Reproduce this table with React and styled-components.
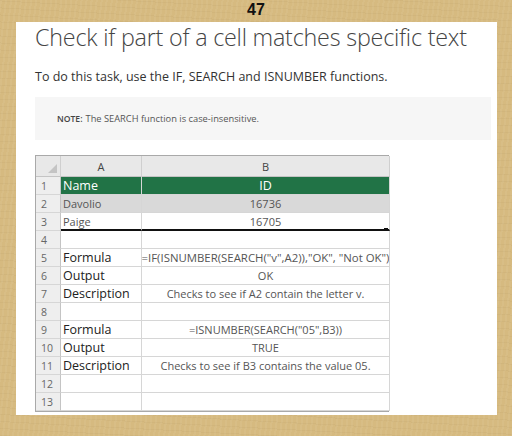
import React from "react";
import styled, { createGlobalStyle } from "styled-components";

const Global = createGlobalStyle`
  html, body { margin: 0; padding: 0; }
  body {
    width: 512px; height: 436px; overflow: hidden;
    background: #d5b97f;
    font-family: "Open Sans", "Noto Sans", sans-serif;
  }
`;

const Frame = styled.div`
  width: 512px;
  height: 436px;
  box-sizing: border-box;
  background:
    repeating-linear-gradient(97deg, rgba(255,255,255,0.05) 0 2px, rgba(0,0,0,0) 2px 5px),
    repeating-linear-gradient(3deg, rgba(120,90,40,0.05) 0 1px, rgba(0,0,0,0) 1px 7px),
    #d6ba80;
  display: flex;
  flex-direction: column;
  align-items: center;
`;

const PageNum = styled.div`
  height: 22px;
  font-family: "Liberation Sans", Arial, sans-serif;
  font-weight: bold;
  font-size: 16px;
  line-height: 20px;
  color: #111;
  text-align: center;
  width: 100%;
`;

const Sheet = styled.div`
  width: 481px;
  height: 393px;
  margin-left: 1px;
  background: #fff;
  box-sizing: border-box;
  padding: 0 6px 0 19px;
  display: flex;
  flex-direction: column;
`;

const Title = styled.h1`
  margin: 0;
  font-family: "Open Sans", sans-serif;
  font-weight: 300;
  font-size: 23.3px;
  line-height: 30px;
  color: #444;
  letter-spacing: -0.2px;
  white-space: nowrap;
`;

const Lead = styled.p`
  margin: 16px 0 0;
  font-family: "Open Sans", sans-serif;
  font-size: 12.5px;
  line-height: 18px;
  color: #333;
  white-space: nowrap;
`;

const Note = styled.div`
  margin-top: 11px;
  height: 43px;
  width: 456px;
  background: #f6f6f6;
  box-sizing: border-box;
  padding-left: 22px;
  display: flex;
  align-items: center;
  font-family: "Open Sans", sans-serif;
  font-size: 9.3px;
  color: #555;
  white-space: nowrap;
`;

const NoteLabel = styled.span`
  font-weight: 600;
  font-size: 8.6px;
  margin-right: 3px;
  color: #444;
`;

const Table = styled.div`
  margin-top: 15px;
  width: 354px;
  display: grid;
  grid-template-columns: 25px 81px 248px;
  border: 1px solid #a9a9a9;
  border-right-color: #9a9a9a;
  box-sizing: border-box;
  font-family: "Open Sans", sans-serif;
  color: #333;
  position: relative;
`;

const Corner = styled.div`
  height: 21px;
  background: #e8e8e8;
  border-right: 1px solid #cfcfcf;
  border-bottom: 1px solid #c4c4c4;
  box-sizing: border-box;
  position: relative;
  &::after {
    content: "";
    position: absolute;
    right: 3px;
    bottom: 3px;
    border-style: solid;
    border-width: 0 0 9px 9px;
    border-color: transparent transparent #c4c4c4 transparent;
  }
`;

const ColHead = styled.div`
  height: 21px;
  background: #e8e8e8;
  border-right: 1px solid #cfcfcf;
  border-bottom: 1px solid #c4c4c4;
  box-sizing: border-box;
  display: flex;
  align-items: center;
  justify-content: center;
  font-size: 11px;
  color: #444;
`;

const RowNum = styled.div`
  height: 18px;
  background: #eeeeee;
  border-right: 1px solid #c4c4c4;
  border-bottom: 1px solid #d6d6d6;
  box-sizing: border-box;
  display: flex;
  align-items: center;
  padding-left: 5px;
  font-size: 10.5px;
  color: #666;
`;

const Cell = styled.div`
  height: 18px;
  box-sizing: border-box;
  border-right: 1px solid #d6d6d6;
  border-bottom: ${(p) => (p.$thick ? "2px solid #111" : "1px solid #d6d6d6")};
  background: ${(p) => (p.$bg === "green" ? "#217346" : p.$bg === "gray" ? "#d9d9d9" : "#fff")};
  color: ${(p) => (p.$bg === "green" ? "#fff" : p.$bold ? "#222" : "#555")};
  display: flex;
  align-items: center;
  justify-content: ${(p) => (p.$center ? "center" : "flex-start")};
  padding-left: ${(p) => (p.$center ? "0" : "2px")};
  font-size: ${(p) => (p.$big ? "12.5px" : p.$wide ? "11.4px" : "11px")};
  font-weight: ${(p) => (p.$bold ? 500 : 400)};
  white-space: nowrap;
  overflow: hidden;
  position: relative;
`;

const Handle = styled.span`
  position: absolute;
  right: 1px;
  bottom: -3px;
  width: 4px;
  height: 4px;
  background: #111;
`;

const rows = [
  { n: 1, a: "Name", b: "ID", bg: "green", big: true },
  { n: 2, a: "Davolio", b: "16736", bg: "gray" },
  { n: 3, a: "Paige", b: "16705", thick: true },
  { n: 4, a: "", b: "" },
  { n: 5, a: "Formula", b: '=IF(ISNUMBER(SEARCH("v",A2)),"OK", "Not OK")', bold: true, wide: true },
  { n: 6, a: "Output", b: "OK", bold: true },
  { n: 7, a: "Description", b: "Checks to see if A2 contain the letter v.", bold: true },
  { n: 8, a: "", b: "" },
  { n: 9, a: "Formula", b: '=ISNUMBER(SEARCH("05",B3))', bold: true },
  { n: 10, a: "Output", b: "TRUE", bold: true },
  { n: 11, a: "Description", b: "Checks to see if B3 contains the value 05.", bold: true },
  { n: 12, a: "", b: "" },
  { n: 13, a: "", b: "" },
];

export default function App() {
  return (
    <>
      <Global />
      <Frame>
        <PageNum>47</PageNum>
        <Sheet>
          <Title>Check if part of a cell matches specific text</Title>
          <Lead>To do this task, use the IF, SEARCH and ISNUMBER functions.</Lead>
          <Note>
            <NoteLabel>NOTE:</NoteLabel> The SEARCH function is case-insensitive.
          </Note>
          <Table>
            <Corner />
            <ColHead>A</ColHead>
            <ColHead>B</ColHead>
            {rows.map((r) => (
              <React.Fragment key={r.n}>
                <RowNum>{r.n}</RowNum>
                <Cell $bg={r.bg} $thick={r.thick} $big={r.bold || r.big} $bold={r.bold || r.big}>
                  {r.a}
                </Cell>
                <Cell $bg={r.bg} $thick={r.thick} $center $big={r.big} $bold={r.big} $wide={r.wide}>
                  {r.b}
                  {r.thick && <Handle />}
                </Cell>
              </React.Fragment>
            ))}
          </Table>
        </Sheet>
      </Frame>
    </>
  );
}
